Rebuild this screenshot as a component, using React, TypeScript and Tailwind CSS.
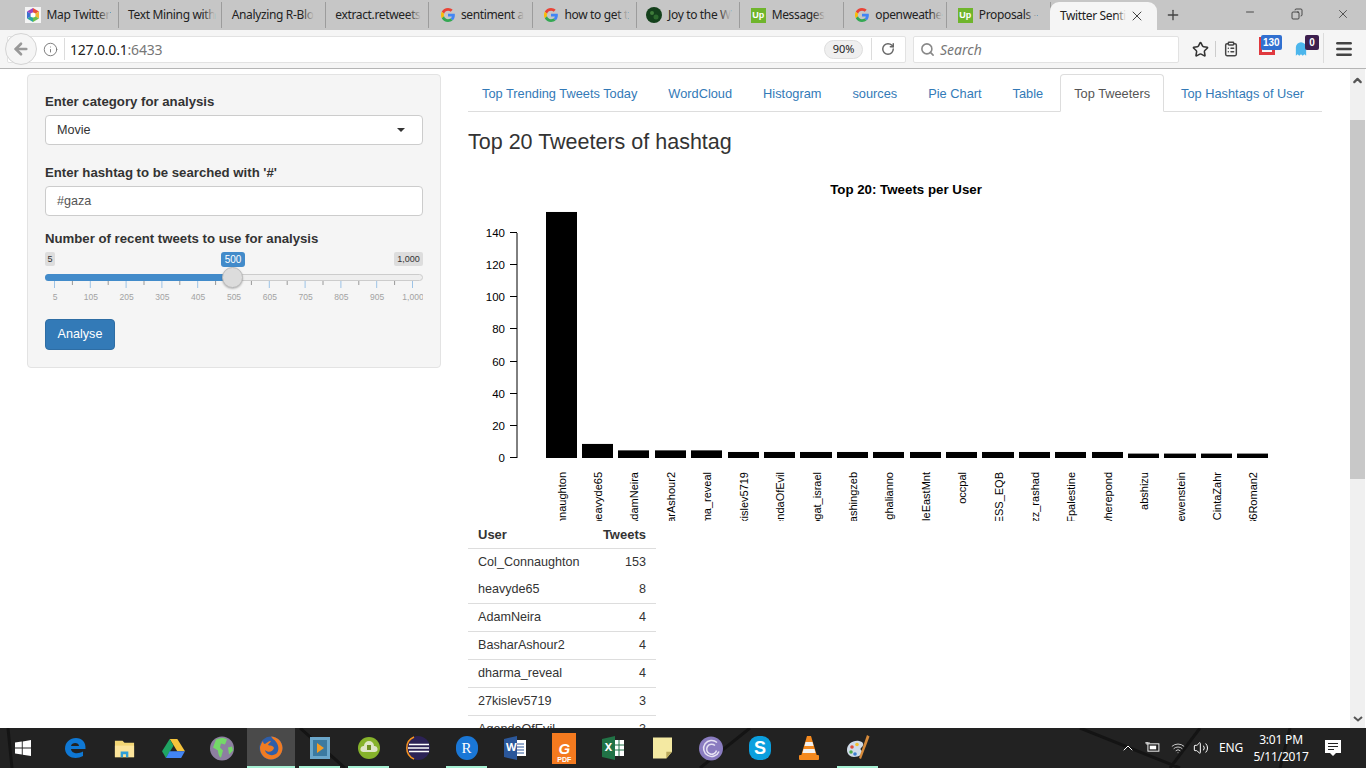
import { ArrowLeft, ChevronUp, ClipboardList, Copy, Info, Menu, Minus, Plus, RotateCw, Search, Star, Volume2, Wifi, X } from 'lucide-react';

type TabIcon = 'map' | 'google' | 'joy' | 'upwork' | null;

const BROWSER_TABS: { label: string; icon: TabIcon }[] = [
    { label: 'Map Twitter', icon: 'map' },
    { label: 'Text Mining with', icon: null },
    { label: 'Analyzing R-Blo', icon: null },
    { label: 'extract.retweets', icon: null },
    { label: 'sentiment a', icon: 'google' },
    { label: 'how to get t', icon: 'google' },
    { label: 'Joy to the W', icon: 'joy' },
    { label: 'Messages', icon: 'upwork' },
    { label: 'openweathe', icon: 'google' },
    { label: 'Proposals -', icon: 'upwork' },
];

const PAGE_TABS = ['Top Trending Tweets Today', 'WordCloud', 'Histogram', 'sources', 'Pie Chart', 'Table', 'Top Tweeters', 'Top Hashtags of User'];

const SLIDER_LABELS = ['5', '105', '205', '305', '405', '505', '605', '705', '805', '905', '1,000'];

const BARS = [
    { name: 'Col_Connaughton', x: 546, w: 31, n: 153 },
    { name: 'heavyde65', x: 582, w: 31, n: 8 },
    { name: 'AdamNeira', x: 618, w: 31, n: 4 },
    { name: 'BasharAshour2', x: 655, w: 31, n: 4 },
    { name: 'dharma_reveal', x: 691, w: 31, n: 4 },
    { name: '27kislev5719', x: 728, w: 31, n: 3 },
    { name: 'AgendaOfEvil', x: 764, w: 31, n: 3 },
    { name: 'bogat_israel', x: 800, w: 32, n: 3 },
    { name: 'Washingzeb', x: 837, w: 31, n: 3 },
    { name: 'ghalianno', x: 873, w: 31, n: 3 },
    { name: 'MiddleEastMnt', x: 910, w: 31, n: 3 },
    { name: 'occpal', x: 946, w: 31, n: 3 },
    { name: 'PRESS_EQB', x: 982, w: 32, n: 3 },
    { name: 'Azz_rashad', x: 1019, w: 31, n: 3 },
    { name: 'IFpalestine', x: 1055, w: 31, n: 3 },
    { name: 'wherepond', x: 1092, w: 31, n: 3 },
    { name: 'abshizu', x: 1128, w: 31, n: 2 },
    { name: 'lewenstein', x: 1164, w: 32, n: 2 },
    { name: 'CintaZahr', x: 1201, w: 31, n: 2 },
    { name: '36Roman2', x: 1237, w: 31, n: 2 },
];

const TABLE_ROWS: [string, number][] = [
    ['Col_Connaughton', 153],
    ['heavyde65', 8],
    ['AdamNeira', 4],
    ['BasharAshour2', 4],
    ['dharma_reveal', 4],
    ['27kislev5719', 3],
    ['AgendaOfEvil', 3],
];

function GoogleIcon() {
    return (
        <svg viewBox="0 0 48 48" className="w-[14px] h-[14px] shrink-0 ml-[2px]">
            <path fill="#ea4335" d="M24 9.5c3.5 0 6.700 1.300 9.200 3.400l6.800-6.800C35.900 2.400 30.300 0 24 0 14.600 0 6.500 5.400 2.600 13.200l7.900 6.100C12.400 13.600 17.700 9.500 24 9.500z" />
            <path fill="#4285f4" d="M47.500 24.500c0-1.600-.1-3.100-.4-4.500H24v9h13.200c-.6 3-2.300 5.500-4.800 7.200l7.700 6c4.500-4.200 7.400-10.300 7.400-17.700z" />
            <path fill="#fbbc05" d="M10.500 28.700c-.5-1.400-.8-3-.8-4.700s.3-3.300.8-4.700l-7.900-6.100C.9 16.500 0 20.100 0 24s.9 7.500 2.600 10.800l7.900-6.100z" />
            <path fill="#34a853" d="M24 48c6.500 0 11.900-2.100 15.900-5.800l-7.700-6c-2.200 1.400-4.900 2.300-8.200 2.300-6.300 0-11.600-4.100-13.500-9.800l-7.900 6.100C6.500 42.600 14.600 48 24 48z" />
        </svg>
    );
}

function TabFavicon({ icon }: { icon: TabIcon }) {
    if (icon === 'google') return <GoogleIcon />;
    if (icon === 'upwork') {
        return (
            <span className="w-[15px] h-[15px] shrink-0 ml-px bg-[#6fb52c] text-white text-[9px] font-bold leading-[15px] text-center font-['Liberation_Sans',sans-serif]">
                Up
            </span>
        );
    }
    if (icon === 'joy') {
        return (
            <svg viewBox="0 0 16 16" className="w-[16px] h-[16px] shrink-0">
                <circle cx="8" cy="8" r="8" fill="#14401c" />
                <circle cx="6" cy="6" r="2" fill="#3f7d3a" />
                <circle cx="10" cy="10" r="2.500" fill="#2d6a2e" />
            </svg>
        );
    }
    if (icon === 'map') {
        return (
            <svg viewBox="0 0 16 16" className="w-[16px] h-[16px] shrink-0">
                <rect width="16" height="16" fill="#f4f4f4" />
                <path d="M8 1 L14 4.500 L8 8 Z" fill="#e8503a" />
                <path d="M14 4.500 L14 11.500 L8 8 Z" fill="#f2b632" />
                <path d="M14 11.500 L8 15 L8 8 Z" fill="#6cc04a" />
                <path d="M8 15 L2 11.500 L8 8 Z" fill="#2ca7a0" />
                <path d="M2 11.500 L2 4.500 L8 8 Z" fill="#3c6fd0" />
                <path d="M2 4.500 L8 1 L8 8 Z" fill="#9b45c0" />
                <circle cx="8" cy="8" r="2.500" fill="#fff" />
            </svg>
        );
    }
    return null;
}

function BrowserChrome() {
    return (
        <div className="shrink-0 font-['Noto_Sans',sans-serif] text-[#222]">
            {/* tab strip */}
            <div className="h-[30px] bg-[#c6c6c6] flex items-end pl-[15px] relative">
                {BROWSER_TABS.map((tab) => (
                    <div key={tab.label} className="w-[103.6px] h-[26px] flex items-center gap-[6px] pl-[9.5px] border-r border-[#9c9c9c] my-auto relative">
                        <TabFavicon icon={tab.icon} />
                        <span className="text-[12px] whitespace-nowrap tracking-[-0.35px] relative">
                            {tab.label}
                            <span className="absolute right-0 top-0 bottom-0 w-[12px] bg-gradient-to-r from-transparent to-[#c6c6c6]" />
                        </span>
                    </div>
                ))}
                <div className="w-[107px] h-[28px] -ml-px bg-[#f5f5f5] rounded-t-[9px] flex items-center pl-[10px] relative">
                    <span className="text-[12px] whitespace-nowrap tracking-[-0.35px] relative">
                        Twitter Senti
                        <span className="absolute right-0 top-0 bottom-0 w-[10px] bg-gradient-to-r from-transparent to-[#f5f5f5]" />
                    </span>
                    <X className="absolute right-[12px] top-[6px] w-[16px] h-[16px] text-[#444]" strokeWidth={1.5} />
                </div>
                <Plus className="absolute left-[1165px] top-[7px] w-[16px] h-[16px] text-[#444]" strokeWidth={2} />
                <Minus className="absolute left-[1244px] top-[6px] w-[12px] h-[12px] text-[#222]" strokeWidth={1.5} />
                <Copy className="absolute left-[1291px] top-[8px] w-[12px] h-[12px] text-[#222] -scale-x-100" strokeWidth={1.5} />
                <X className="absolute left-[1336px] top-[7px] w-[14px] h-[14px] text-[#222]" strokeWidth={1.2} />
            </div>
            {/* nav bar */}
            <div className="h-[39px] bg-[#f5f5f5] border-b border-[#b5b5b5] flex items-center relative">
                <div className="ml-[7px] w-[899px] h-[27px] bg-white border border-[#e2e2e2] rounded-[2px] flex items-center pl-[36px] pr-[7px]">
                    <Info className="w-[15px] h-[15px] text-[#777] shrink-0 -ml-[1px]" strokeWidth={1.5} />
                    <div className="w-px h-[22px] bg-[#dcdcdc] ml-[6px] mr-[5px]" />
                    <span className="text-[14px] tracking-[-0.2px]">
                        127.0.0.1<span className="text-[#777]">:6433</span>
                    </span>
                    <span className="ml-auto w-[39px] h-[19px] rounded-full bg-[#efefef] border border-[#dedede] text-[11px] flex items-center justify-center">90%</span>
                    <div className="w-px h-[22px] bg-[#dcdcdc] ml-[8px] mr-[9px]" />
                    <RotateCw className="w-[14px] h-[14px] text-[#666] mr-[3px]" strokeWidth={2.5} />
                </div>
                <div className="absolute left-[5px] top-[3px] w-[32px] h-[32px] rounded-full bg-[#f5f5f5] border border-[#d4d4d4] flex items-center justify-center">
                    <ArrowLeft className="w-[18px] h-[18px] text-[#999]" strokeWidth={3.5} />
                </div>
                <div className="ml-[7px] w-[266px] h-[27px] bg-white border border-[#e2e2e2] rounded-[2px] flex items-center pl-[6px] gap-[5px]">
                    <Search className="w-[15px] h-[15px] text-[#888]" strokeWidth={2.5} />
                    <span className="text-[14px] italic text-[#777]">Search</span>
                </div>
                <Star className="ml-[13px] w-[17px] h-[17px] text-[#333]" strokeWidth={2.2} />
                <div className="w-px h-[16px] bg-[#ccc] ml-[6px]" />
                <ClipboardList className="ml-[7px] w-[16px] h-[16px] text-[#444]" strokeWidth={2.2} />
                {/* add-on badges */}
                <div className="absolute left-[1259px] top-[7px] w-[16px] h-[18px] border-x-[3px] border-b-[3px] border-[#e0393e]" />
                <span className="absolute left-[1261px] top-[5px] h-[15px] px-[2px] rounded-[2px] bg-[#3170d0] text-white text-[10px] font-bold leading-[15px] font-['Liberation_Sans',sans-serif]">130</span>
                <svg viewBox="0 0 14 18" className="absolute left-[1295px] top-[11px] w-[12px] h-[16px]">
                    <path d="M1 17V7a6 6 0 0 1 12 0v10l-2-2-2 2-2-2-2 2-2-2z" fill="#4cb6ec" />
                </svg>
                <span className="absolute left-[1305px] top-[5px] w-[14px] h-[15px] rounded-[2px] bg-[#3d1f4e] text-white text-[10px] font-bold leading-[15px] text-center font-['Liberation_Sans',sans-serif]">0</span>
                <div className="absolute left-[1323px] top-[3px] bottom-[5px] w-px bg-[#dcdcdc]" />
                <Menu className="absolute left-[1334px] top-[9px] w-[20px] h-[20px] text-[#444]" strokeWidth={3} />
            </div>
        </div>
    );
}

function Sidebar() {
    return (
        <div className="w-[414px] h-[294px] mt-[5px] shrink-0 bg-[#f5f5f5] border border-[#e3e3e3] rounded-[4px] px-[17px] pt-[19px] text-[12.6px] text-[#333]">
            <div className="font-bold leading-[16px] text-[13.2px]">Enter category for analysis</div>
            <div className="mt-[5px] h-[30px] bg-white border border-[#ccc] rounded-[4px] flex items-center px-[11px]">
                Movie
                <div className="ml-auto mr-[6px] w-0 h-0 border-x-[4px] border-x-transparent border-t-[4px] border-t-[#333]" />
            </div>
            <div className="mt-[20px] font-bold leading-[16px] text-[13.2px]">Enter hashtag to be searched with '#'</div>
            <div className="mt-[5px] h-[30px] bg-white border border-[#ccc] rounded-[4px] flex items-center px-[11px] text-[#555]">#gaza</div>
            <div className="mt-[15px] font-bold leading-[16px] text-[13.2px]">Number of recent tweets to use for analysis</div>
            {/* slider */}
            <div className="relative h-[34px] text-[9px]">
                <span className="absolute left-0 top-[5px] h-[14px] w-[10px] bg-[#ddd] rounded-[2px] text-center leading-[14px]">5</span>
                <span className="absolute left-[176px] top-[5px] h-[15px] w-[24px] bg-[#428bca] text-white rounded-[3px] text-center leading-[15px] text-[10px]">500</span>
                <span className="absolute right-0 top-[5px] h-[14px] w-[29px] bg-[#ddd] rounded-[2px] text-center leading-[14px]">1,000</span>
                <div className="absolute left-0 right-0 top-[27px] h-[7px] rounded-full bg-[#eee] border border-[#ccc]" />
                <div className="absolute left-0 w-[188px] top-[27px] h-[7px] rounded-l-full bg-[#428bca]" />
                <div className="absolute left-[177px] top-[20px] w-[21px] h-[21px] rounded-full bg-[#dcdcdc] border border-[#bbb] shadow-[0_1px_2px_rgba(0,0,0,0.25)]" />
            </div>
            <svg viewBox="45 281 378 22" className="block w-[378px] h-[22px]">
                {Array.from({ length: 21 }, (_, i) => (
                    <line key={i} x1={54.5 + i * 17.9} x2={54.5 + i * 17.9} y1={281} y2={i % 2 === 0 ? 288 : 285} stroke={i % 2 === 0 ? '#9dc3e6' : '#999'} />
                ))}
                {SLIDER_LABELS.map((label, i) => (
                    <text key={label} x={55 + i * 35.8} y={300} textAnchor="middle" fontSize="8.500" fill="#a3a3a3" fontFamily="'Liberation Sans', sans-serif">
                        {label}
                    </text>
                ))}
            </svg>
            <button className="mt-[16px] block h-[31px] w-[70px] bg-[#337ab7] border border-[#2e6da4] rounded-[4px] text-white">Analyse</button>
        </div>
    );
}

function TweetsChart() {
    const base = 458;
    const scale = 1.608;
    // the short bars come out a touch taller in the plot than the scale gives
    const barHeight = (n: number) => n * scale + (n < 10 ? 1.2 : 0);
    return (
        <svg viewBox="468 170 854 351" className="block w-[854px] h-[351px] shrink-0">
            <defs>
                <clipPath id="label-clip">
                    <rect x="468" y="460" width="854" height="61" />
                </clipPath>
            </defs>
            <text x="906" y="194" textAnchor="middle" fontSize="13.300" fontWeight="bold" fill="#000" fontFamily="'Liberation Sans', sans-serif">
                Top 20: Tweets per User
            </text>
            <path d="M517 233V458" stroke="#000" fill="none" />
            {[0, 20, 40, 60, 80, 100, 120, 140].map((v) => {
                const y = Math.round(base - v * scale) - 0.5;
                return (
                    <g key={v}>
                        <line x1="510" x2="517" y1={y} y2={y} stroke="#000" />
                        <text x="505" y={y + 4} textAnchor="end" fontSize="11.500" fill="#000" fontFamily="'Liberation Sans', sans-serif">
                            {v}
                        </text>
                    </g>
                );
            })}
            {BARS.map((bar) => (
                <rect key={bar.name} x={bar.x} y={base - barHeight(bar.n)} width={bar.w} height={barHeight(bar.n)} fill="#000" />
            ))}
            <g clipPath="url(#label-clip)">
                {BARS.map((bar) => {
                    const cx = bar.x + bar.w / 2 + 4.5;
                    return (
                        <text key={bar.name} transform={`translate(${cx} 472) rotate(-90)`} textAnchor="end" fontSize="11" fill="#000" fontFamily="'Liberation Sans', sans-serif">
                            {bar.name}
                        </text>
                    );
                })}
            </g>
        </svg>
    );
}

function MainPanel() {
    return (
        <div className="ml-[27px] w-[854px] shrink-0 mt-[5px] text-[12.6px] text-[#333]">
            <ul className="flex h-[38px] border-b border-[#ddd] gap-[3px]">
                {PAGE_TABS.map((tab) => {
                    const isActive = tab === 'Top Tweeters';
                    return (
                        <li
                            key={tab}
                            className={`h-[38px] text-[12.8px] rounded-t-[4px] whitespace-nowrap ${isActive ? 'px-[13px] leading-[37px] bg-white border border-[#ddd] border-b-white text-[#555]' : 'px-[14px] leading-[39px] text-[#337ab7]'}`}
                        >
                            {tab}
                        </li>
                    );
                })}
            </ul>
            <h3 className="text-[21.5px] leading-[24px] mt-[18px] mb-[16px] h-[24px] text-[#333]">Top 20 Tweeters of hashtag</h3>
            <TweetsChart />
            <table className="w-[188px] border-collapse">
                <thead>
                    <tr className="h-[27px] border-b border-[#ddd] font-bold">
                        <th className="text-left pl-[10px] font-bold text-[13px]">User</th>
                        <th className="text-right pr-[10px] font-bold text-[13px]">Tweets</th>
                    </tr>
                </thead>
                <tbody>
                    {TABLE_ROWS.map(([user, count], i) => (
                        <tr key={user} className={`${i === 1 ? 'h-[27px]' : 'h-[28px]'} ${i === 0 ? '' : 'border-b border-[#ddd]'}`}>
                            <td className="pl-[10px]">{user}</td>
                            <td className="text-right pr-[10px]">{count}</td>
                        </tr>
                    ))}
                </tbody>
            </table>
        </div>
    );
}

function Scrollbar() {
    return (
        <div className="ml-auto mr-px w-[15px] bg-[#f0f0f0] flex flex-col items-center shrink-0">
            <div className="h-[51px] w-full pt-[5px] flex justify-center">
                <ChevronUp className="w-[13px] h-[13px] text-[#555]" strokeWidth={4} />
            </div>
            <div className="h-[359px] w-full bg-[#c8c8c8]" />
            <svg viewBox="0 0 10 6" className="w-[10px] h-[6px] mt-auto mb-[6px]">
                <path d="M1 1l4 3.500L9 1" stroke="#555" strokeWidth="2" fill="none" />
            </svg>
        </div>
    );
}

function TaskIcon({ children, underline, active }: { children: React.ReactNode; underline?: boolean; active?: boolean }) {
    return (
        <div className={`w-[48.9px] h-[40px] shrink-0 flex items-center justify-center relative ${active ? 'bg-[#4a4a4a]' : ''}`}>
            {children}
            {underline && <div className={`absolute bottom-0 h-[2px] bg-[#a6f0d3] ${active ? 'left-0 right-0' : 'left-[4px] right-[4px]'}`} />}
        </div>
    );
}

function Taskbar() {
    return (
        <div className="h-[40px] shrink-0 bg-[#222] flex text-white relative overflow-hidden font-['Noto_Sans',sans-serif]">
            <svg viewBox="0 0 1366 40" className="absolute inset-0 w-full h-full">
                <path d="M8 0L12 40M300 0L345 40M700 40L750 0M1080 0L1180 40M1170 40L1200 0M1290 0L1280 40" stroke="#141414" strokeWidth="3" fill="none" />
            </svg>
            <div className="w-[51px] shrink-0 flex items-center justify-center relative">
                <svg viewBox="0 0 16 16" className="w-[16px] h-[16px] -ml-[5px]">
                    <path d="M0 2.500L6.800 1.500V7.500H0zM7.700 1.400L16 0V7.500H7.700zM0 8.500H6.800V14.500L0 13.500zM7.700 8.500H16V16L7.700 14.700z" fill="#fff" />
                </svg>
            </div>
            <TaskIcon>
                <svg viewBox="0 0 24 24" className="w-[24px] h-[24px]">
                    <path d="M2 13C2 6 7 2 13 2c6 0 10 4 9.500 11H8c.3 4.500 7 5.500 12 2.500V20c-7 4-17 2-18-7zM8 10h8c0-4-7.500-4-8 0z" fill="#0f78d4" />
                </svg>
            </TaskIcon>
            <TaskIcon>
                <svg viewBox="0 0 24 24" className="w-[23px] h-[23px]">
                    <path d="M2 4h8l2 2h10v15H2z" fill="#f2d675" />
                    <rect x="2" y="9" width="20" height="12" fill="#fbe49b" />
                    <path d="M8 21v-6h8v6h-2.500v-3h-3v3z" fill="#2e9fd8" />
                </svg>
            </TaskIcon>
            <TaskIcon>
                <svg viewBox="0 0 24 22" className="w-[23px] h-[21px]">
                    <path d="M8 1h8l8 13h-8z" fill="#f5c33b" />
                    <path d="M8 1L0 14l4 7 8-13z" fill="#1fa463" />
                    <path d="M4 21h16l4-7H8z" fill="#4285f4" />
                </svg>
            </TaskIcon>
            <TaskIcon>
                <svg viewBox="0 0 24 24" className="w-[24px] h-[25px]">
                    <circle cx="12" cy="12" r="12" fill="#8d7fa0" />
                    <path d="M6 3c4-2 8-2 11 0l-2 5-4-1-1 4 3 3-2 7c-2 0-3-5-3-7L3 11z" fill="#74d868" />
                    <path d="M18 11l4-1 1 4-4 4z" fill="#74d868" />
                </svg>
            </TaskIcon>
            <TaskIcon active underline>
                <svg viewBox="0 0 24 24" className="w-[24px] h-[24px]">
                    <circle cx="12" cy="12" r="11.500" fill="#2f5ea8" />
                    <path d="M12 .5C18 .5 23.500 5.500 23.500 12S18 23.500 12 23.500 .5 18 1 11c1-3 2-5 3-6 0 2 1 3 2 3 2-1 3-3 6-3-1 2-2 2-3 4 2 1 5 0 6 3-1 4-6 5-9 2 1 5 8 7 12 3 3-4 1-11-4-14z" fill="#ef7b22" />
                </svg>
            </TaskIcon>
            <TaskIcon underline>
                <svg viewBox="0 0 20 22" className="w-[20px] h-[22px]">
                    <rect width="20" height="22" fill="#6ba7cb" />
                    <rect x="3" y="3" width="14" height="16" fill="#3c7aa0" />
                    <path d="M7 6l7 5-7 5z" fill="#f59b23" />
                </svg>
            </TaskIcon>
            <TaskIcon underline>
                <svg viewBox="0 0 22 22" className="w-[22px] h-[22px]">
                    <circle cx="11" cy="11" r="11" fill="#86b32b" />
                    <path d="M5 15a3 3 0 0 1 1-6 5 5 0 0 1 10 0 3 3 0 0 1 1 6z" fill="#dfe6c8" />
                    <rect x="9" y="8" width="4" height="5" fill="#6d8f22" />
                </svg>
            </TaskIcon>
            <TaskIcon>
                <svg viewBox="0 0 24 24" className="w-[24px] h-[24px]">
                    <circle cx="12" cy="12" r="12" fill="#2c2255" />
                    <path d="M8 1a12 12 0 0 0 0 22" stroke="#f7941e" strokeWidth="1.500" fill="none" />
                    <path d="M3 8.500h20M2 12h21M3 15.500h20" stroke="#fff" strokeWidth="1.500" />
                </svg>
            </TaskIcon>
            <TaskIcon underline>
                <div className="w-[22px] h-[24px] rounded-full bg-[#1a77d6] text-white text-[15px] text-center leading-[24px] font-['Liberation_Serif',serif]">R</div>
            </TaskIcon>
            <TaskIcon>
                <svg viewBox="0 0 22 24" className="w-[22px] h-[24px]">
                    <rect x="8" y="4" width="14" height="16" fill="#fff" />
                    <path d="M11 8h9M11 11h9M11 14h9M11 17h9" stroke="#2b579a" />
                    <path d="M0 3l13-3v24L0 21z" fill="#2b579a" />
                </svg>
                <span className="absolute left-[15px] top-[11px] text-[11px] font-bold text-white">W</span>
            </TaskIcon>
            <TaskIcon>
                <div className="w-[24px] h-[31px] bg-[#f47a1f] flex flex-col items-center justify-end text-white font-['Liberation_Sans',sans-serif] leading-none">
                    <span className="text-[15px] font-bold italic">G</span>
                    <span className="text-[7px] font-bold mb-[1px]">PDF</span>
                </div>
            </TaskIcon>
            <TaskIcon>
                <svg viewBox="0 0 22 24" className="w-[22px] h-[24px]">
                    <rect x="8" y="4" width="14" height="16" fill="#fff" />
                    <path d="M12 4v16M17 4v16M11 9h11M11 14h11" stroke="#217346" />
                    <path d="M0 3l13-3v24L0 21z" fill="#217346" />
                </svg>
                <span className="absolute left-[16px] top-[11px] text-[11px] font-bold text-white">X</span>
            </TaskIcon>
            <TaskIcon>
                <svg viewBox="0 0 20 22" className="w-[19px] h-[22px]">
                    <path d="M0 0h20v15l-6 7H0z" fill="#f4e9a2" />
                    <path d="M14 22v-7h6z" fill="#b9a95c" />
                </svg>
            </TaskIcon>
            <TaskIcon>
                <svg viewBox="0 0 24 24" className="w-[24px] h-[25px]">
                    <circle cx="12" cy="12" r="12" fill="#8a7cc0" />
                    <path d="M18 6a8 8 0 1 0 2 9M16 9a5 5 0 1 0 1.500 5" stroke="#e6e2f3" strokeWidth="1.500" fill="none" />
                </svg>
            </TaskIcon>
            <TaskIcon>
                <div className="w-[22px] h-[24px] rounded-[9px] bg-[#0b9fde] text-white text-[18px] font-bold text-center leading-[24px] font-['Liberation_Sans',sans-serif]">S</div>
            </TaskIcon>
            <TaskIcon>
                <svg viewBox="0 0 20 24" className="w-[20px] h-[24px]">
                    <path d="M8 0h4l6 20H2z" fill="#f58a1f" />
                    <path d="M6.500 6h7l1 4h-9zM4.500 13h11l1 4h-13z" fill="#f3f3f3" />
                    <rect y="19" width="20" height="5" rx="1" fill="#f58a1f" />
                </svg>
            </TaskIcon>
            <TaskIcon underline>
                <svg viewBox="0 0 24 26" className="w-[24px] h-[26px]">
                    <path d="M1 15C1 9 7 5 13 6c5 1 5 4 3 6-2 1-2 3 0 4 1 3-3 6-8 6-4 0-7-3-7-7z" fill="#cfdbe8" />
                    <circle cx="6" cy="12" r="1.800" fill="#e04b3a" />
                    <circle cx="11" cy="9.500" r="1.800" fill="#f2c230" />
                    <circle cx="5" cy="17" r="1.800" fill="#4ca64c" />
                    <circle cx="9" cy="19" r="1.800" fill="#3c7ed0" />
                    <path d="M21 0l2.500 1.500L15 24l-2-1z" fill="#d68a3a" />
                </svg>
            </TaskIcon>
            <div className="ml-auto relative h-full w-[250px] shrink-0 text-[12px]">
                <ChevronUp className="absolute left-[4px] top-[12px] w-[16px] h-[16px]" strokeWidth={1.5} />
                <svg viewBox="0 0 16 12" className="absolute left-[29px] top-[14px] w-[15px] h-[11px]">
                    <rect x="3" y="2" width="12" height="8" stroke="#fff" fill="none" />
                    <rect x="5" y="4" width="7" height="4" fill="#fff" />
                    <path d="M0 1h5M2 0v3" stroke="#fff" />
                </svg>
                <Wifi className="absolute left-[55px] top-[13px] w-[14px] h-[14px] text-[#ddd]" strokeWidth={1.5} />
                <Volume2 className="absolute left-[77px] top-[12px] w-[16px] h-[16px]" strokeWidth={1.5} />
                <span className="absolute left-[103px] top-[11px] tracking-[-0.2px]">ENG</span>
                <div className="absolute left-[133px] w-[64px] top-[3px] text-center leading-[17px] tracking-[-0.2px]">
                    <div>3:01 PM</div>
                    <div>5/11/2017</div>
                </div>
                <svg viewBox="0 0 16 17" className="absolute left-[209px] top-[12px] w-[16px] h-[17px]">
                    <path d="M0 0h16v13h-5l-3 3-3-3H0z" fill="#fff" />
                    <path d="M3 3.500h10M3 6.500h10M3 9.500h6" stroke="#222" />
                </svg>
            </div>
        </div>
    );
}

export default function App() {
    return (
        <div className="w-[1366px] h-[768px] flex flex-col overflow-hidden bg-white font-['Liberation_Sans',Arial,sans-serif]">
            <BrowserChrome />
            <div className="flex-1 min-h-0 flex overflow-hidden pl-[27px]">
                <Sidebar />
                <MainPanel />
                <Scrollbar />
            </div>
            <Taskbar />
        </div>
    );
}
